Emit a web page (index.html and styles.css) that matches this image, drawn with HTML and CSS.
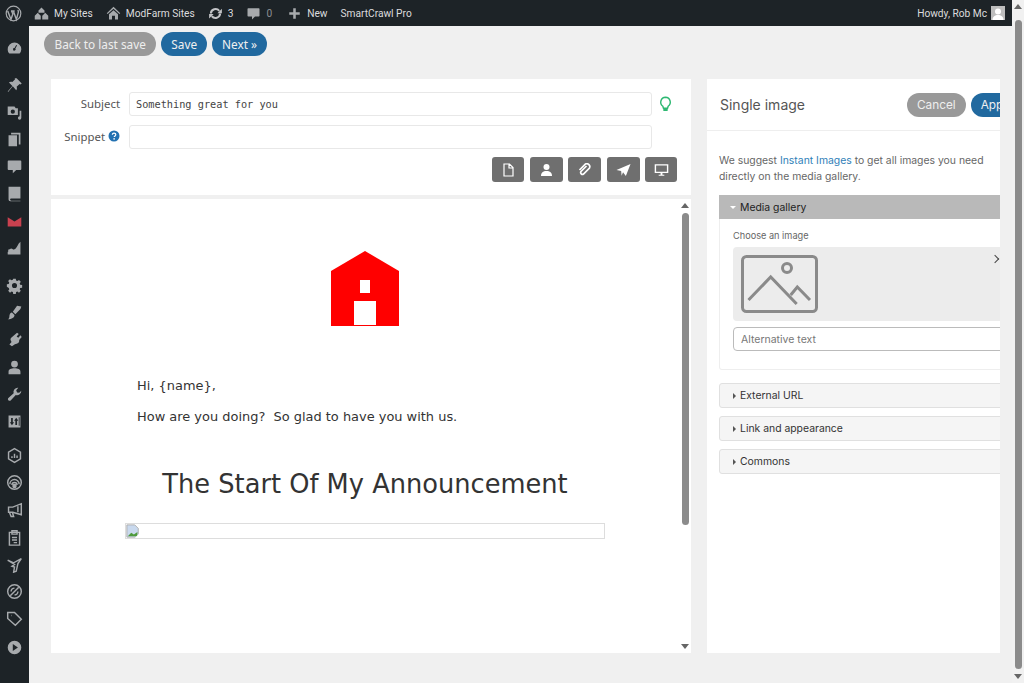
FILE: index.html
```html
<!DOCTYPE html>
<html lang="en">
<head>
  <meta charset="UTF-8">
  <meta name="viewport" content="width=device-width, initial-scale=1.0">
  <title>Edit email</title>
  <link rel="stylesheet" href="styles.css">
</head>
<body>
  <div class="page">
    <header class="adminbar">
      <svg class="bar-logo" viewBox="0 0 20 20"><circle cx="10" cy="10" r="8.6" fill="none" stroke="#a7aaad" stroke-width="1.4"/><path d="M3.2 7 7 17l2.2-6.3L7.8 7M7 7h4.4M9.8 7l3.6 10L15.6 9c.5-1.5 0-2.4-.8-2.9" fill="none" stroke="#a7aaad" stroke-width="1.7"/></svg>
      <span class="bar-item first">
        <svg class="bar-ico" viewBox="0 0 20 20"><path d="M10 2 14 6v3H6V6zM5 9l4 4v5H1v-5zM15 9l4 4v5h-8v-5z" fill="#a7aaad"/></svg>My Sites
      </span>
      <span class="bar-item">
        <svg class="bar-ico" viewBox="0 0 20 20"><path d="M10 1 19 9.5l-1.2 1.2L10 3.5 2.200 10.700 1 9.500zM4 11l6-5.500L16 11v7h-4v-5H8v5H4z" fill="#a7aaad"/></svg>ModFarm Sites
      </span>
      <span class="bar-item">
        <svg class="bar-ico" viewBox="0 0 20 20"><path d="M3.800 10A6.300 6.300 0 0 1 15 6.500M16.200 10A6.300 6.300 0 0 1 5 13.500" fill="none" stroke="#c3c4c7" stroke-width="2.800"/><path d="M18.500 3.500v6h-6zM1.500 16.500v-6h6z" fill="#c3c4c7"/></svg>3
      </span>
      <span class="bar-item muted">
        <svg class="bar-ico" viewBox="0 0 20 20"><path d="M3 3h14a1 1 0 0 1 1 1v9a1 1 0 0 1-1 1h-5l-4 4v-4H3a1 1 0 0 1-1-1V4a1 1 0 0 1 1-1z" fill="#a7aaad"/></svg>0
      </span>
      <span class="bar-item plus">
        <svg class="bar-ico" viewBox="0 0 20 20"><path d="M8.300 3h3.400v5.300H17v3.400h-5.300V17H8.300v-5.300H3V8.300h5.300z" fill="#a7aaad"/></svg>New
      </span>
      <span class="bar-item">SmartCrawl Pro</span>
      <span class="bar-user">Howdy, Rob Mc
        <svg class="avatar" viewBox="0 0 14 14"><rect width="14" height="14" fill="#bdbdbd"/><circle cx="7" cy="5.500" r="3" fill="#fff"/><path d="M1.500 14c0-3.500 2.500-5 5.500-5s5.500 1.500 5.500 5z" fill="#fff"/></svg>
      </span>
    </header>

    <div class="wrap">
      <nav class="sidebar">
        <svg class="side-ico" viewBox="0 0 20 20"><path d="M10 3a8 8 0 0 0-8 8c0 2 .7 3.800 2 5h12a8 8 0 0 0 2-5 8 8 0 0 0-8-8zM10 9.500l2-3.500 1 .6-2 3.500a1.500 1.500 0 1 1-1-.6z"/></svg>
        <svg class="side-ico gap-top" viewBox="0 0 20 20"><path d="M12.500 1.500l6 6-1.500 1.300-1-.5-3.500 3.200c.7 1.500.4 3-.5 4L8 11l-5.500 6.500-.5-.5L7.500 10.500 3.500 6.500c1-.9 2.500-1.200 4-.5l3.200-3.500-.5-1z"/></svg>
        <svg class="side-ico" viewBox="0 0 20 20"><path d="M2 3h8l1.500 2H14v8H2zM8 6.500a2.500 2.500 0 1 0 0 5 2.500 2.500 0 0 0 0-5zM16 8h2v8.500a2 2 0 1 1-2-2z"/></svg>
        <svg class="side-ico" viewBox="0 0 20 20"><path d="M6 2h11v14h-2V4H6zM3 5h10v13H3z"/></svg>
        <svg class="side-ico" viewBox="0 0 20 20"><path d="M3 3h14a1 1 0 0 1 1 1v9a1 1 0 0 1-1 1h-5l-4 4v-4H3a1 1 0 0 1-1-1V4a1 1 0 0 1 1-1z"/></svg>
        <svg class="side-ico" viewBox="0 0 20 20"><path d="M3 2h14v14H6a1.200 1.200 0 0 0 0 2.400h11V19H5a2 2 0 0 1-2-2zM5 2.500h1V15H5z"/></svg>
        <svg class="side-ico red" viewBox="0 0 20 20"><path d="M2 5l8 5 8-5v11H2z"/></svg>
        <svg class="side-ico" viewBox="0 0 20 20"><path d="M17 2v15H2v-3c2-1 2-4 4-4s2 2 4 1 4-5 5-7zM4 11a1.500 1.500 0 1 1 0 3 1.500 1.500 0 0 1 0-3z"/></svg>
        <svg class="side-ico gap-top" viewBox="0 0 20 20"><path d="M8.500 2h3l.4 2.200 1.500.6 1.900-1.300 2.100 2.100-1.300 1.900.6 1.500 2.300.5v3l-2.300.4-.6 1.500 1.300 1.900-2.100 2.100-1.900-1.300-1.500.6-.4 2.300h-3l-.4-2.300-1.500-.6-1.900 1.300-2.100-2.100 1.300-1.900-.6-1.500L1 11.500v-3l2.200-.4.600-1.500-1.300-1.900 2.100-2.100 1.900 1.300 1.500-.6zM10 7a3 3 0 1 0 0 6 3 3 0 0 0 0-6z"/></svg>
        <svg class="side-ico" viewBox="0 0 20 20"><path d="M13 2l5 1-1 3-6 6-3-3zM7 10l3 3c0 3-3 5-8 5 2-1 2-3 2-4 0-2 1.500-4 3-4z"/></svg>
        <svg class="side-ico" viewBox="0 0 20 20"><path d="M13 2l2 1.500-2.500 3 2 1.500L17 5l1.500 2-3 3.500c.5 2-1 4-3 4.500l-2 .5L7 18l-3-2 2.500-3-1-2c-.5-1.500 0-3 1-3.500z"/></svg>
        <svg class="side-ico" viewBox="0 0 20 20"><path d="M10 2a4 4 0 1 1 0 8 4 4 0 0 1 0-8zM3 18v-3c0-3 3-4 7-4s7 1 7 4v3z"/></svg>
        <svg class="side-ico" viewBox="0 0 20 20"><path d="M18 5.500a5 5 0 0 1-6.500 5L5.500 17a2 2 0 0 1-3-2.500l6.500-6A5 5 0 0 1 14.500 2L12 5l1 2.500 2.500.5z"/></svg>
        <svg class="side-ico" viewBox="0 0 20 20"><path d="M3 3h14v14H3zM6 6v5H4.500L7 14.500 9.500 11H8V6zM13 14V9h1.500L12 5.500 9.500 9H11v5zM15 5h1v10h-1z" fill-rule="evenodd"/></svg>
        <svg class="side-ico line gap-small" viewBox="0 0 20 20"><path d="M10 2l7 4v8l-7 4-7-4V6zM7 13v-2M10 13V8M13 13v-3"/></svg>
        <svg class="side-ico line" viewBox="0 0 20 20"><circle cx="10" cy="10" r="8"/><path d="M4.500 12a5.500 5.500 0 0 1 11 0M7 13a3 3 0 0 1 6 0"/><circle cx="10" cy="14" r="1.800" fill="#a7aaad"/></svg>
        <svg class="side-ico line" viewBox="0 0 20 20"><path d="M18 2v13L8 12H3V6h5zM4 12l2 5h3l-1.500-5M14 5v7"/></svg>
        <svg class="side-ico line" viewBox="0 0 20 20"><path d="M4 4h12v15H4zM7 2h6v4H7zM7 10h6M7 13h6M9 16h4"/></svg>
        <svg class="side-ico line" viewBox="0 0 20 20"><path d="M2 5l7 3 9-5-4 6-2 9-3 1 1-6-3-1 3-2z"/></svg>
        <svg class="side-ico line" viewBox="0 0 20 20"><circle cx="10" cy="10" r="8"/><path d="M5 15 15 5M6 10a4 4 0 0 1 4-4M14 10a4 4 0 0 1-4 4"/></svg>
        <svg class="side-ico line" viewBox="0 0 20 20"><path d="M2 3h8l8 8-7 7-9-8zM6 6.500h.5"/></svg>
        <svg class="side-ico last" viewBox="0 0 20 20"><path d="M10 2a8 8 0 1 1 0 16 8 8 0 0 1 0-16zM8 6v8l6-4z" fill-rule="evenodd"/></svg>
      </nav>

      <main class="content">
        <div class="toolbar">
          <button class="pill grey back">Back to last save</button>
          <button class="pill blue">Save</button>
          <button class="pill blue">Next »</button>
        </div>

        <div class="editor">
          <section class="left">
            <div class="fields">
              <div class="row">
                <label class="field-label">Subject</label>
                <input class="field mono" type="text" value="Something great for you">
                <svg class="bulb" viewBox="0 0 14 18"><path d="M7 1.500a5.500 5.500 0 0 0-3 10l.7 2.200h4.600L10 11.500a5.500 5.500 0 0 0-3-10z" fill="none" stroke="#2eb872" stroke-width="1.600"/><path d="M4.500 14.500h5V16a1 1 0 0 1-1 1h-3a1 1 0 0 1-1-1z" fill="#2eb872"/></svg>
              </div>
              <div class="row">
                <label class="field-label">Snippet
                  <svg class="help" viewBox="0 0 12 12"><circle cx="6" cy="6" r="5.500" fill="#2271b1"/><path d="M4.300 4.700C4.400 3.700 5 3.100 6 3.100s1.800.6 1.800 1.500c0 1.300-1.600 1.300-1.600 2.500" fill="none" stroke="#fff" stroke-width="1.200"/><circle cx="6.100" cy="8.900" r=".8" fill="#fff"/></svg>
                </label>
                <input class="field" type="text">
              </div>
              <div class="tools">
                <button class="tool"><svg viewBox="0 0 14 14"><path d="M2.500 1h5.500l3.500 3.500V13h-9zM7.500 1.500v3.500h3.500" fill="none" stroke="#fff" stroke-width="1.200"/></svg></button>
                <button class="tool wide"><svg viewBox="0 0 14 14"><circle cx="7" cy="4" r="3" fill="#fff"/><path d="M1.500 13c0-3.500 2-5 5.500-5s5.500 1.500 5.500 5z" fill="#fff"/></svg></button>
                <button class="tool wide"><svg viewBox="0 0 14 14"><path d="M9 3 3.500 8.500a1.800 1.800 0 0 0 2.500 2.500l6-6a3 3 0 0 0-4-4L2 7" fill="none" stroke="#fff" stroke-width="1.700"/></svg></button>
                <button class="tool wide"><svg viewBox="0 0 16 14"><path d="M15.500.5 10.500 13.500 7.500 9.500 6 13 5.500 8 .5 7z" fill="#fff"/></svg></button>
                <button class="tool"><svg viewBox="0 0 16 14"><path d="M1.500 1.500h13v8h-13z" fill="none" stroke="#fff" stroke-width="1.500"/><path d="M5 13h6v-1H9V10H7v2H5z" fill="#fff"/></svg></button>
              </div>
            </div>

            <div class="preview">
              <div class="email">
                <svg class="email-logo" viewBox="0 0 68 75"><path d="M34 0 68 20v55H0V20z" fill="#f00"/><rect x="29" y="29" width="10" height="13" fill="#fff"/><rect x="23" y="50" width="22" height="24" fill="#fff"/></svg>
                <p class="email-text">Hi, {name},</p>
                <p class="email-text second">How are you doing?&nbsp; So glad to have you with us.</p>
                <h2 class="email-title">The Start Of My Announcement</h2>
                <div class="broken">
                  <svg viewBox="0 0 16 16"><path d="M1 1h9l4 4v10H1z" fill="#c9d9ee" stroke="#a8a8a8"/><path d="M2 14l4-4 3 2 4-3v5z" fill="#4f9a3b"/><path d="M10 16l6-6v6z" fill="#fff"/></svg>
                </div>
              </div>
              <div class="mini-scroll">
                <span class="arrow up"></span>
                <span class="mini-thumb"></span>
                <span class="arrow down"></span>
              </div>
            </div>
          </section>

          <aside class="right">
            <div class="right-inner">
              <div class="right-head">
                <h3 class="right-title">Single image</h3>
                <button class="pill grey small">Cancel</button>
                <button class="pill blue small">Apply</button>
              </div>
              <div class="right-body">
                <p class="hint">We suggest <a href="#">Instant Images</a> to get all images you need directly on the media gallery.</p>
                <div class="acc open">
                  <div class="acc-head"><span class="caret-down"></span>Media gallery</div>
                  <div class="acc-body">
                    <div class="small-label">Choose an image</div>
                    <div class="picker">
                      <svg class="pic" viewBox="0 0 77 58"><rect x="1.500" y="1.500" width="74" height="55" rx="4" fill="none" stroke="#8a8a8a" stroke-width="3"/><circle cx="46" cy="13" r="4.500" fill="none" stroke="#8a8a8a" stroke-width="3"/><path d="M7.500 45 29.700 22 55.700 49M49.700 40l6.600-8L69 45" fill="none" stroke="#8a8a8a" stroke-width="3"/></svg>
                      <span class="chev"></span>
                    </div>
                    <input class="alt" type="text" placeholder="Alternative text">
                  </div>
                </div>
                <div class="acc closed"><span class="caret-right"></span>External URL</div>
                <div class="acc closed"><span class="caret-right"></span>Link and appearance</div>
                <div class="acc closed"><span class="caret-right"></span>Commons</div>
              </div>
            </div>
          </aside>
        </div>
      </main>
    </div>
  </div>

  <div class="page-scroll">
    <span class="arrow up"></span>
    <span class="page-thumb"></span>
    <span class="arrow down"></span>
  </div>
</body>
</html>
```
FILE: styles.css
```css
html, body {
  height: 683px;
  overflow: hidden;
}

body {
  margin: 0;
  display: flex;
  background-color: #f0f0f0;
  font-family: 'Noto Sans', sans-serif;
  color: #3c434a;
}

.page {
  flex: 1;
  min-width: 0;
  display: flex;
  flex-direction: column;
}

/* top bar */
.adminbar {
  height: 26px;
  flex: none;
  display: flex;
  align-items: center;
  padding-left: 5px;
  background-color: #1d2327;
  color: #dcdcde;
  font-family: Roboto, sans-serif;
  font-size: 10.2px;
}

.bar-logo {
  width: 17px;
  height: 17px;
}

.bar-item {
  display: flex;
  align-items: center;
  gap: 5px;
  margin-left: 13px;
  white-space: nowrap;
}

.bar-item.first {
  margin-left: 12px;
}

.bar-item.plus {
  margin-left: 15px;
}

.bar-item.muted {
  color: #8c8f94;
}

.bar-ico {
  width: 15px;
  height: 15px;
}

.bar-user {
  margin-left: auto;
  margin-right: 7px;
  display: flex;
  align-items: center;
  gap: 4px;
}

.avatar {
  width: 14px;
  height: 14px;
}

.wrap {
  flex: 1;
  display: flex;
  min-height: 0;
}

/* left menu */
.sidebar {
  width: 29px;
  flex: none;
  display: flex;
  flex-direction: column;
  align-items: center;
  padding-top: 13.5px;
  gap: 10.2px;
  background-color: #1d2327;
}

.side-ico {
  width: 17px;
  height: 17px;
  flex: none;
  fill: #a7aaad;
}

.side-ico.red {
  fill: #c9414f;
}

.side-ico.line {
  fill: none;
  stroke: #a7aaad;
  stroke-width: 1.7;
}

.gap-top {
  margin-top: 10px;
}

.gap-small {
  margin-top: 7px;
}

.side-ico.last {
  margin-top: 2px;
}

.content {
  flex: 1;
  min-width: 0;
}

.toolbar {
  display: flex;
  gap: 5px;
  padding: 6px 15px 0;
}

.pill {
  height: 24px;
  padding: 0 10px;
  border: none;
  border-radius: 12px;
  font-family: 'Noto Sans', sans-serif;
  font-size: 11.8px;
  white-space: nowrap;
}

.pill.back {
  padding: 0 10.5px;
}

.pill.grey {
  background-color: #999;
  color: #eee;
}

.pill.blue {
  background-color: #21699f;
  color: #f0f0f0;
}

.editor {
  display: flex;
  gap: 16px;
  margin: 23px 12px 0 22px;
  height: 574px;
}

.left {
  width: 640px;
  flex: none;
  display: flex;
  flex-direction: column;
  gap: 4px;
}

.fields {
  height: 116px;
  box-sizing: border-box;
  padding: 13px 14px 0 0;
  background-color: #fff;
}

.row {
  display: flex;
  align-items: center;
  height: 24px;
  margin-bottom: 9px;
}

.field-label {
  width: 69px;
  flex: none;
  display: flex;
  justify-content: flex-end;
  align-items: center;
  gap: 3px;
  padding-bottom: 2px;
  font-size: 11.4px;
  color: #555;
  white-space: nowrap;
}

.field {
  width: 523px;
  height: 24px;
  box-sizing: border-box;
  margin-left: 9px;
  padding: 0 6px;
  border: 1px solid #e8e8e8;
  border-radius: 3px;
  background-color: #fff;
  color: #444;
}

.mono {
  font-family: 'DejaVu Sans Mono', monospace;
  font-size: 10.25px;
}

.bulb {
  width: 13px;
  height: 16px;
  margin-left: 7px;
}

.help {
  width: 12px;
  height: 12px;
}

.tools {
  display: flex;
  justify-content: flex-end;
  gap: 5.500px;
  margin-top: -1px;
}

.tool {
  width: 32px;
  height: 25px;
  padding: 0;
  display: flex;
  align-items: center;
  justify-content: center;
  border: none;
  border-radius: 3px;
  background-color: #6f6f6f;
}

.tool.wide {
  width: 33px;
}

.tool svg {
  width: 15px;
  height: 14px;
}

.preview {
  flex: 1;
  min-height: 0;
  display: flex;
  background-color: #fff;
}

.email {
  flex: 1;
  display: flex;
  flex-direction: column;
  align-items: center;
  padding-top: 52px;
  font-family: 'DejaVu Sans', Verdana, sans-serif;
  color: #333;
}

.email-logo {
  width: 68px;
  height: 75px;
}

.email-text {
  width: 456px;
  margin: 51px 0 0;
  font-size: 12.95px;
  line-height: 18px;
}

.email-text.second {
  margin-top: 13px;
}

.email-title {
  margin: 41px 0 0;
  font-size: 25.7px;
  font-weight: normal;
  line-height: 34px;
  white-space: nowrap;
}

.broken {
  width: 480px;
  height: 16px;
  box-sizing: border-box;
  margin-top: 22px;
  border: 1px solid #ddd;
}

.broken svg {
  display: block;
  width: 14px;
  height: 14px;
}

.mini-scroll, .page-scroll {
  flex: none;
  width: 12px;
  display: flex;
  flex-direction: column;
  align-items: center;
  box-sizing: border-box;
  padding: 4px 0;
}

.page-scroll {
  background-color: #f1f1f1;
}

.mini-scroll {
  background-color: #fff;
}

.arrow {
  width: 0;
  height: 0;
  border-left: 4px solid transparent;
  border-right: 4px solid transparent;
}

.arrow.up {
  border-bottom: 5px solid #666;
}

.arrow.down {
  border-top: 5px solid #666;
  margin-top: auto;
}

.mini-thumb {
  width: 7px;
  height: 312px;
  margin-top: 5px;
  border-radius: 4px;
  background-color: #8b8b8b;
}

.page-thumb {
  width: 7px;
  height: 649px;
  margin-top: 11px;
  border-radius: 4px;
  background-color: #8b8b8b;
}

/* settings panel */
.right {
  width: 293px;
  flex: none;
  overflow: hidden;
  background-color: #fff;
  font-family: Inter, sans-serif;
}

.right-inner {
  width: 340px;
}

.right-head {
  display: flex;
  align-items: center;
  gap: 5px;
  height: 52px;
  box-sizing: border-box;
  padding: 0 0 0 13px;
  border-bottom: 1px solid #eee;
}

.right-title {
  width: 182px;
  margin: 0;
  font-size: 14px;
  font-weight: normal;
  color: #555;
}

.pill.small {
  font-family: Inter, sans-serif;
  font-size: 11.8px;
}

.right-body {
  padding: 22px 0 0 12px;
}

.hint {
  width: 280px;
  margin: 0 0 10px;
  font-size: 10.4px;
  line-height: 16px;
  color: #666;
}

.hint a {
  color: #2f80b8;
  text-decoration: none;
}

.acc-head {
  display: flex;
  align-items: center;
  height: 24px;
  padding-left: 10px;
  background-color: #b9b9b9;
  color: #222;
  font-size: 10.4px;
}

.acc-body {
  height: 151px;
  box-sizing: border-box;
  padding: 10px 13px 0;
  border: 1px solid #eee;
  border-top: none;
  border-radius: 0 0 3px 3px;
}

.small-label {
  font-size: 9.2px;
  line-height: 14px;
  color: #666;
}

.picker {
  position: relative;
  height: 74px;
  box-sizing: border-box;
  margin-top: 4px;
  padding: 8px;
  background-color: #ececec;
  border-radius: 4px;
}

.pic {
  display: block;
  width: 77px;
  height: 58px;
}

.chev {
  position: absolute;
  top: 9px;
  left: 259px;
  width: 5px;
  height: 5px;
  border-top: 1.500px solid #444;
  border-right: 1.500px solid #444;
  transform: rotate(45deg);
}

.alt {
  display: block;
  width: 100%;
  height: 24px;
  box-sizing: border-box;
  margin-top: 6px;
  padding: 0 7px;
  border: 1px solid #bbb;
  border-radius: 4px;
  font-family: Inter, sans-serif;
  font-size: 10.500px;
}

.alt::placeholder {
  color: #777;
}

.acc.closed {
  display: flex;
  align-items: center;
  height: 25px;
  box-sizing: border-box;
  margin-top: 8px;
  padding-left: 13px;
  background-color: #f5f5f5;
  border: 1px solid #e0e0e0;
  border-radius: 3px;
  color: #333;
  font-size: 10.4px;
}

.acc.open + .acc.closed {
  margin-top: 13px;
}

.caret-right {
  width: 0;
  height: 0;
  margin-right: 4px;
  border-top: 3px solid transparent;
  border-bottom: 3px solid transparent;
  border-left: 3px solid #555;
}

.caret-down {
  width: 0;
  height: 0;
  margin-right: 4px;
  margin-left: 1px;
  border-left: 3px solid transparent;
  border-right: 3px solid transparent;
  border-top: 3px solid #fff;
}
```
